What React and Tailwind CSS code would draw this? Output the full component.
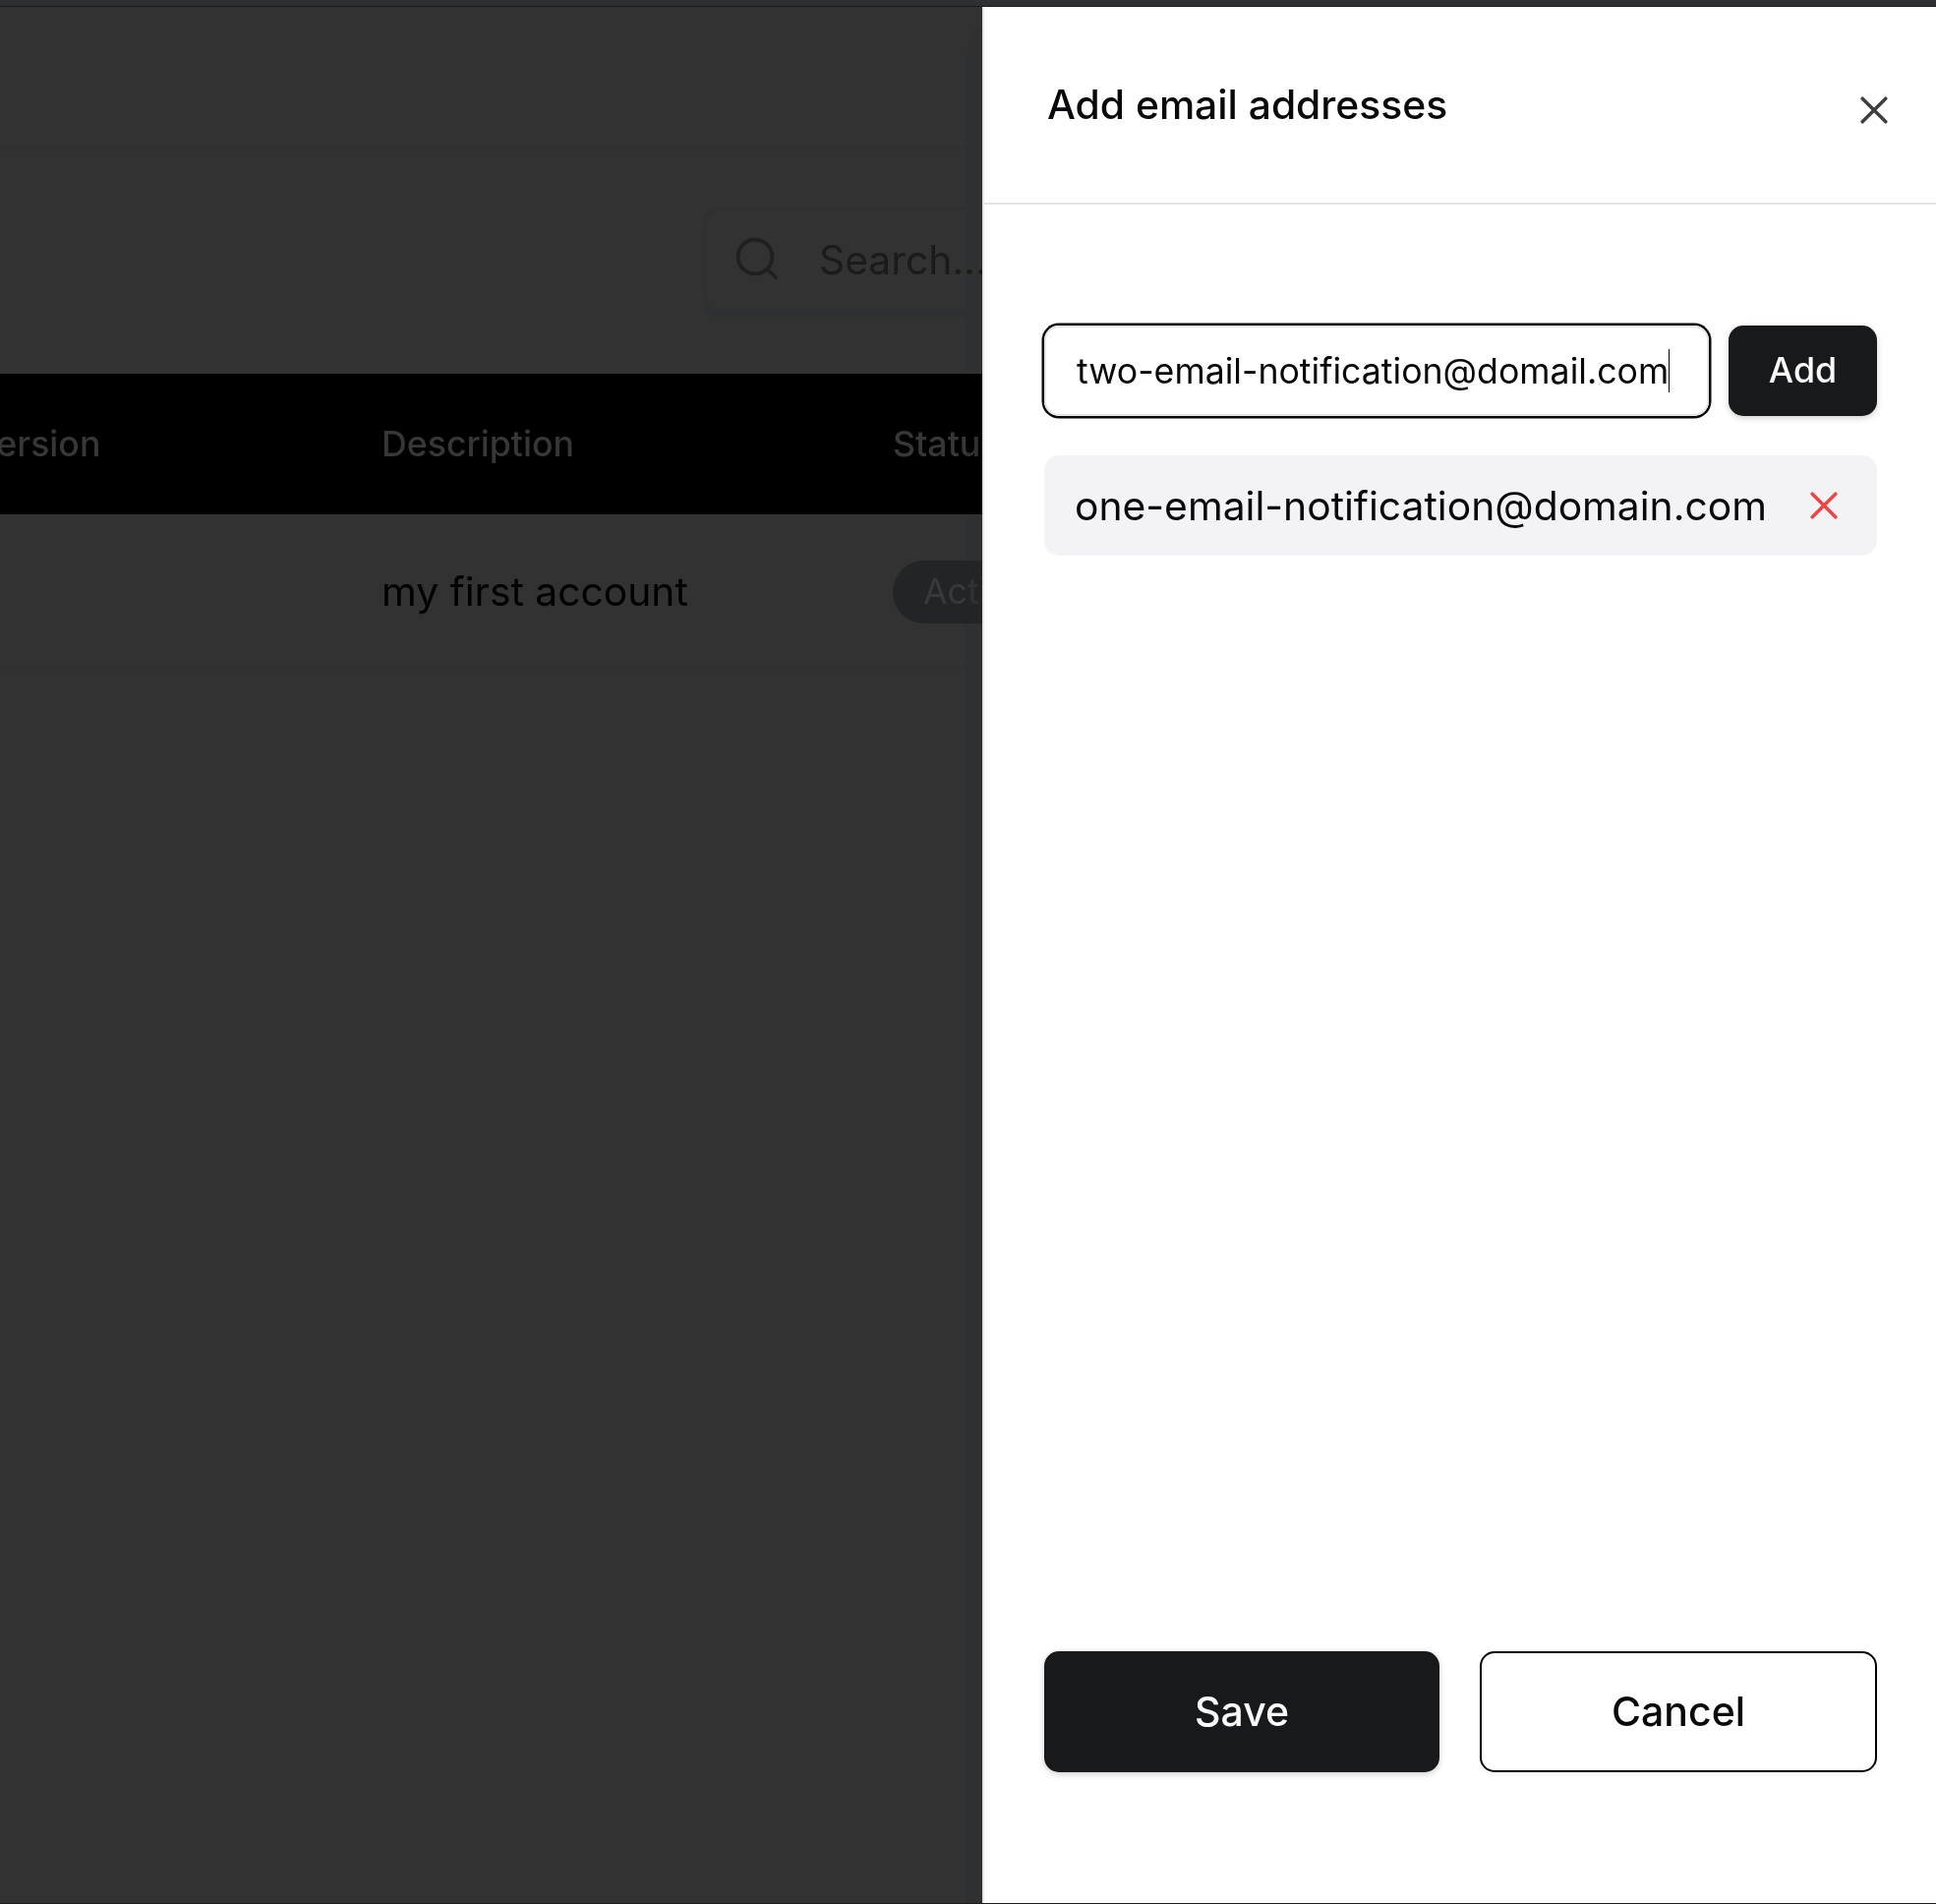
import React from "react";

function Cross({ className }) {
  return (
    <svg viewBox="0 0 28 28" className={className} fill="none" stroke="currentColor" strokeWidth="3.5" strokeLinecap="round">
      <path d="M2.2 2.2 25.8 25.8M25.8 2.2 2.2 25.8" />
    </svg>
  );
}

function Backdrop() {
  return (
    <div className="relative flex w-[999px] shrink-0 flex-col overflow-hidden whitespace-nowrap bg-[#323232]">
      <div className="h-[146px] shrink-0 border-b-[3px] border-[#2f3031]" />
      <div className="flex h-[227px] shrink-0 items-start justify-end pt-[58px]">
        <div className="flex h-[107px] w-[283px] shrink-0 items-center rounded-l-2xl border-[3px] border-r-0 border-[#2e3032] pl-[29px] shadow-[0_3px_2px_#2f3032]">
          <svg viewBox="0 0 44 44" className="-mt-[3px] h-11 w-11 shrink-0" fill="none" stroke="#1f2022" strokeWidth="3.8" strokeLinecap="round">
            <circle cx="20" cy="20" r="17.4" />
            <path d="M32.5 32.5 41 41" />
          </svg>
          <span className="ml-[41px] text-[40.8px] text-[#1a1b1d]">Search...</span>
        </div>
      </div>
      <div className="flex h-[143px] shrink-0 items-center bg-black text-[35.7px] font-medium text-[#373738]">
        <span className="-ml-[27px] w-[415px] shrink-0">Version</span>
        <span className="w-[520px] shrink-0">Description</span>
        <span>Status</span>
      </div>
      <div className="flex h-[158px] shrink-0 items-center border-b-[3px] border-[#2f3031] pt-[2px] pl-[388px] text-[40.8px] text-black">
        <span className="w-[520px] shrink-0">my first account</span>
        <span className="flex h-16 w-[160px] shrink-0 items-center rounded-full bg-[#232425] pl-[31px] text-[35.7px] text-[#38393b]">Active</span>
      </div>
      <div className="absolute top-[19px] right-0 bottom-0 w-[17px] rounded-tl-[22px_50px] bg-[#2f3032] mix-blend-darken" />
    </div>
  );
}

export default function App() {
  return (
    <div className="flex h-[1936px] w-[1969px] flex-col overflow-hidden border-b border-[#1c1c1c] bg-white font-['Inter',sans-serif] text-[#09090b]">
      <div className="h-[7px] shrink-0 border-b border-[#1a1a1a] bg-[#2e2f31]" />
      <div className="flex min-h-0 flex-1">
        <Backdrop />
        <div className="flex flex-1 flex-col border-l-2 border-[#e4e4e4] bg-white">
          <div className="flex h-[201px] shrink-0 items-center justify-between border-b-2 border-[#e4e4e4] pl-[64px] pr-[49px]">
            <h2 className="text-[40.8px] leading-none font-medium">Add email addresses</h2>
            <Cross className="mt-[11px] h-7 w-7 text-[#3f3f3f]" />
          </div>
          <div className="flex flex-1 flex-col pt-[123px] pr-[60px] pl-[61px]">
            <div className="flex h-[92px] shrink-0 gap-[20px]">
              <div className="flex w-[676px] items-center rounded-[15px] border-2 border-[#e4e4e7] pl-[31px] text-[35.7px] whitespace-nowrap shadow-[0_0_0_2.5px_#09090b]">
                <span className="pt-[2px]">two-email-notification@domail.com</span>
                <span className="h-11 w-px bg-black" />
              </div>
              <button className="flex-1 rounded-[15px] bg-[#18191b] text-[35.8px] font-medium text-[#fafafa] shadow-[0_2px_6px_rgba(0,0,0,0.2)]">Add</button>
            </div>
            <div className="mt-[40px] flex h-[102px] shrink-0 items-center justify-between rounded-[15px] bg-[#f3f3f5] pr-[40px] pl-[31px] text-[40.8px] whitespace-nowrap">
              <span className="pt-[2px]">one-email-notification@domain.com</span>
              <Cross className="h-7 w-7 text-[#ef4444]" />
            </div>
            <div className="mt-auto mb-[133px] flex h-[123px] shrink-0 gap-[41px] text-[41px] font-medium">
              <button className="w-[402px] rounded-[15px] bg-[#18191b] text-[#fafafa] shadow-[0_2px_6px_rgba(0,0,0,0.2)]">Save</button>
              <button className="flex-1 rounded-[15px] border-2 border-black bg-white shadow-[0_2px_5px_rgba(0,0,0,0.07)]">Cancel</button>
            </div>
          </div>
        </div>
      </div>
    </div>
  );
}
